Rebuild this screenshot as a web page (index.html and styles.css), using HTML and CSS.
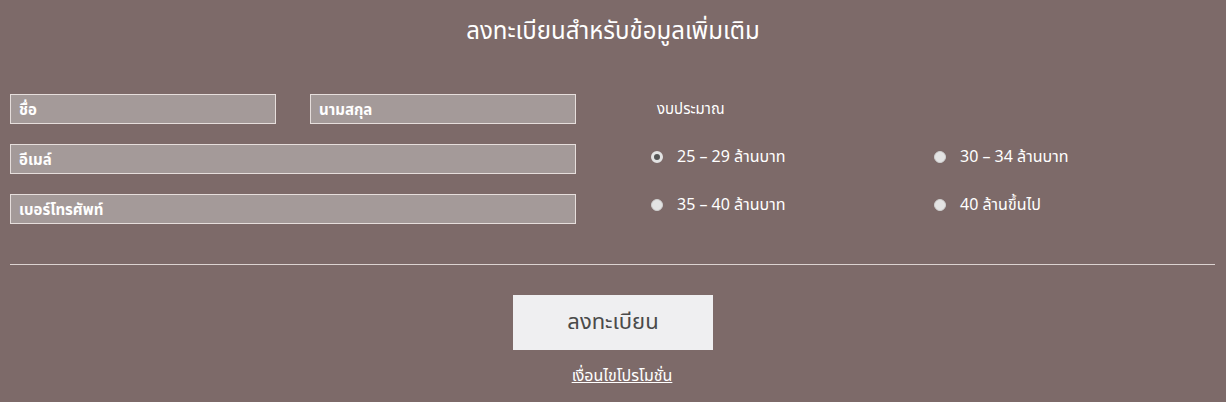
FILE: index.html
```html
<!DOCTYPE html>
<html lang="th">
<head>
<meta charset="utf-8">
<link rel="stylesheet" href="styles.css">
</head>
<body>
<section class="register">
  <h2 class="title">ลงทะเบียนสำหรับข้อมูลเพิ่มเติม</h2>
  <form class="form">
    <div class="fields">
      <div class="fields-left">
        <div class="row-two">
          <input class="field" type="text" placeholder="ชื่อ">
          <input class="field" type="text" placeholder="นามสกุล">
        </div>
        <input class="field" type="text" placeholder="อีเมล์">
        <input class="field" type="text" placeholder="เบอร์โทรศัพท์">
      </div>
      <div class="fields-right">
        <div class="budget-label">งบประมาณ</div>
        <div class="budget-grid">
          <label class="opt"><input class="radio" type="radio" name="b" checked><span>25 – 29 ล้านบาท</span></label>
          <label class="opt"><input class="radio" type="radio" name="b"><span>30 – 34 ล้านบาท</span></label>
          <label class="opt"><input class="radio" type="radio" name="b"><span>35 – 40 ล้านบาท</span></label>
          <label class="opt"><input class="radio" type="radio" name="b"><span>40 ล้านขึ้นไป</span></label>
        </div>
      </div>
    </div>
    <hr class="divider">
    <div class="actions">
      <button class="submit" type="button">ลงทะเบียน</button>
      <a class="terms" href="#">เงื่อนไขโปรโมชั่น</a>
    </div>
  </form>
</section>
</body>
</html>
```

FILE: styles.css
```css
html, body {
  margin: 0;
  padding: 0;
  background: #7d6a69;
}
body {
  font-family: "Noto Sans Thai", "Noto Sans", "Liberation Sans", sans-serif;
  color: #ffffff;
  width: 1226px;
  height: 402px;
  overflow: hidden;
}
.register {
  padding: 0 10px;
}
.title {
  margin: 0;
  padding-top: 17px;
  height: 30px;
  line-height: 30px;
  text-align: center;
  font-size: 24px;
  font-weight: 400;
}
.form {
  margin-top: 47px;
}
.fields {
  display: flex;
}
.fields-left {
  width: 566px;
  display: flex;
  flex-direction: column;
  gap: 20px;
}
.row-two {
  display: flex;
  justify-content: space-between;
}
.row-two .field {
  width: 266px;
}
.field {
  box-sizing: border-box;
  width: 566px;
  height: 30px;
  margin: 0;
  padding: 2px 8px 0;
  border: 1px solid #e6dedc;
  background: #a49a99;
  font-family: inherit;
  font-size: 15px;
  font-weight: 700;
  color: #ffffff;
  outline: none;
}
.field::placeholder {
  color: #ffffff;
  opacity: 1;
}
.fields-right {
  margin-left: 75px;
  display: flex;
  flex-direction: column;
}
.budget-label {
  margin-left: 6px;
  height: 30px;
  line-height: 30px;
  padding-top: 1px;
  font-size: 15px;
}
.budget-grid {
  margin-top: 20px;
  display: grid;
  grid-template-columns: 283px 283px;
  row-gap: 24px;
}
.opt {
  display: flex;
  align-items: center;
  height: 24px;
  font-size: 16px;
}
.radio {
  appearance: none;
  -webkit-appearance: none;
  box-sizing: border-box;
  width: 12px;
  height: 12px;
  margin: 0 14px 0 0;
  border-radius: 50%;
  background: #e3e3e3;
  border: 1px solid #cfcfcf;
}
.radio:checked {
  border: 3px solid #e3e3e3;
  background: #555555;
}
.divider {
  margin: 40px 0 0;
  border: 0;
  height: 1px;
  background: #dcd3d1;
  width: 1205px;
}
.actions {
  display: flex;
  flex-direction: column;
  align-items: center;
  padding-top: 30px;
}
.submit {
  width: 200px;
  height: 55px;
  border: 0;
  background: #efeff1;
  color: #4a4a4a;
  font-family: inherit;
  font-size: 22px;
}
.terms {
  margin-top: 14px;
  margin-left: 18px;
  color: #ffffff;
  font-size: 16px;
  text-decoration: underline;
}
```
